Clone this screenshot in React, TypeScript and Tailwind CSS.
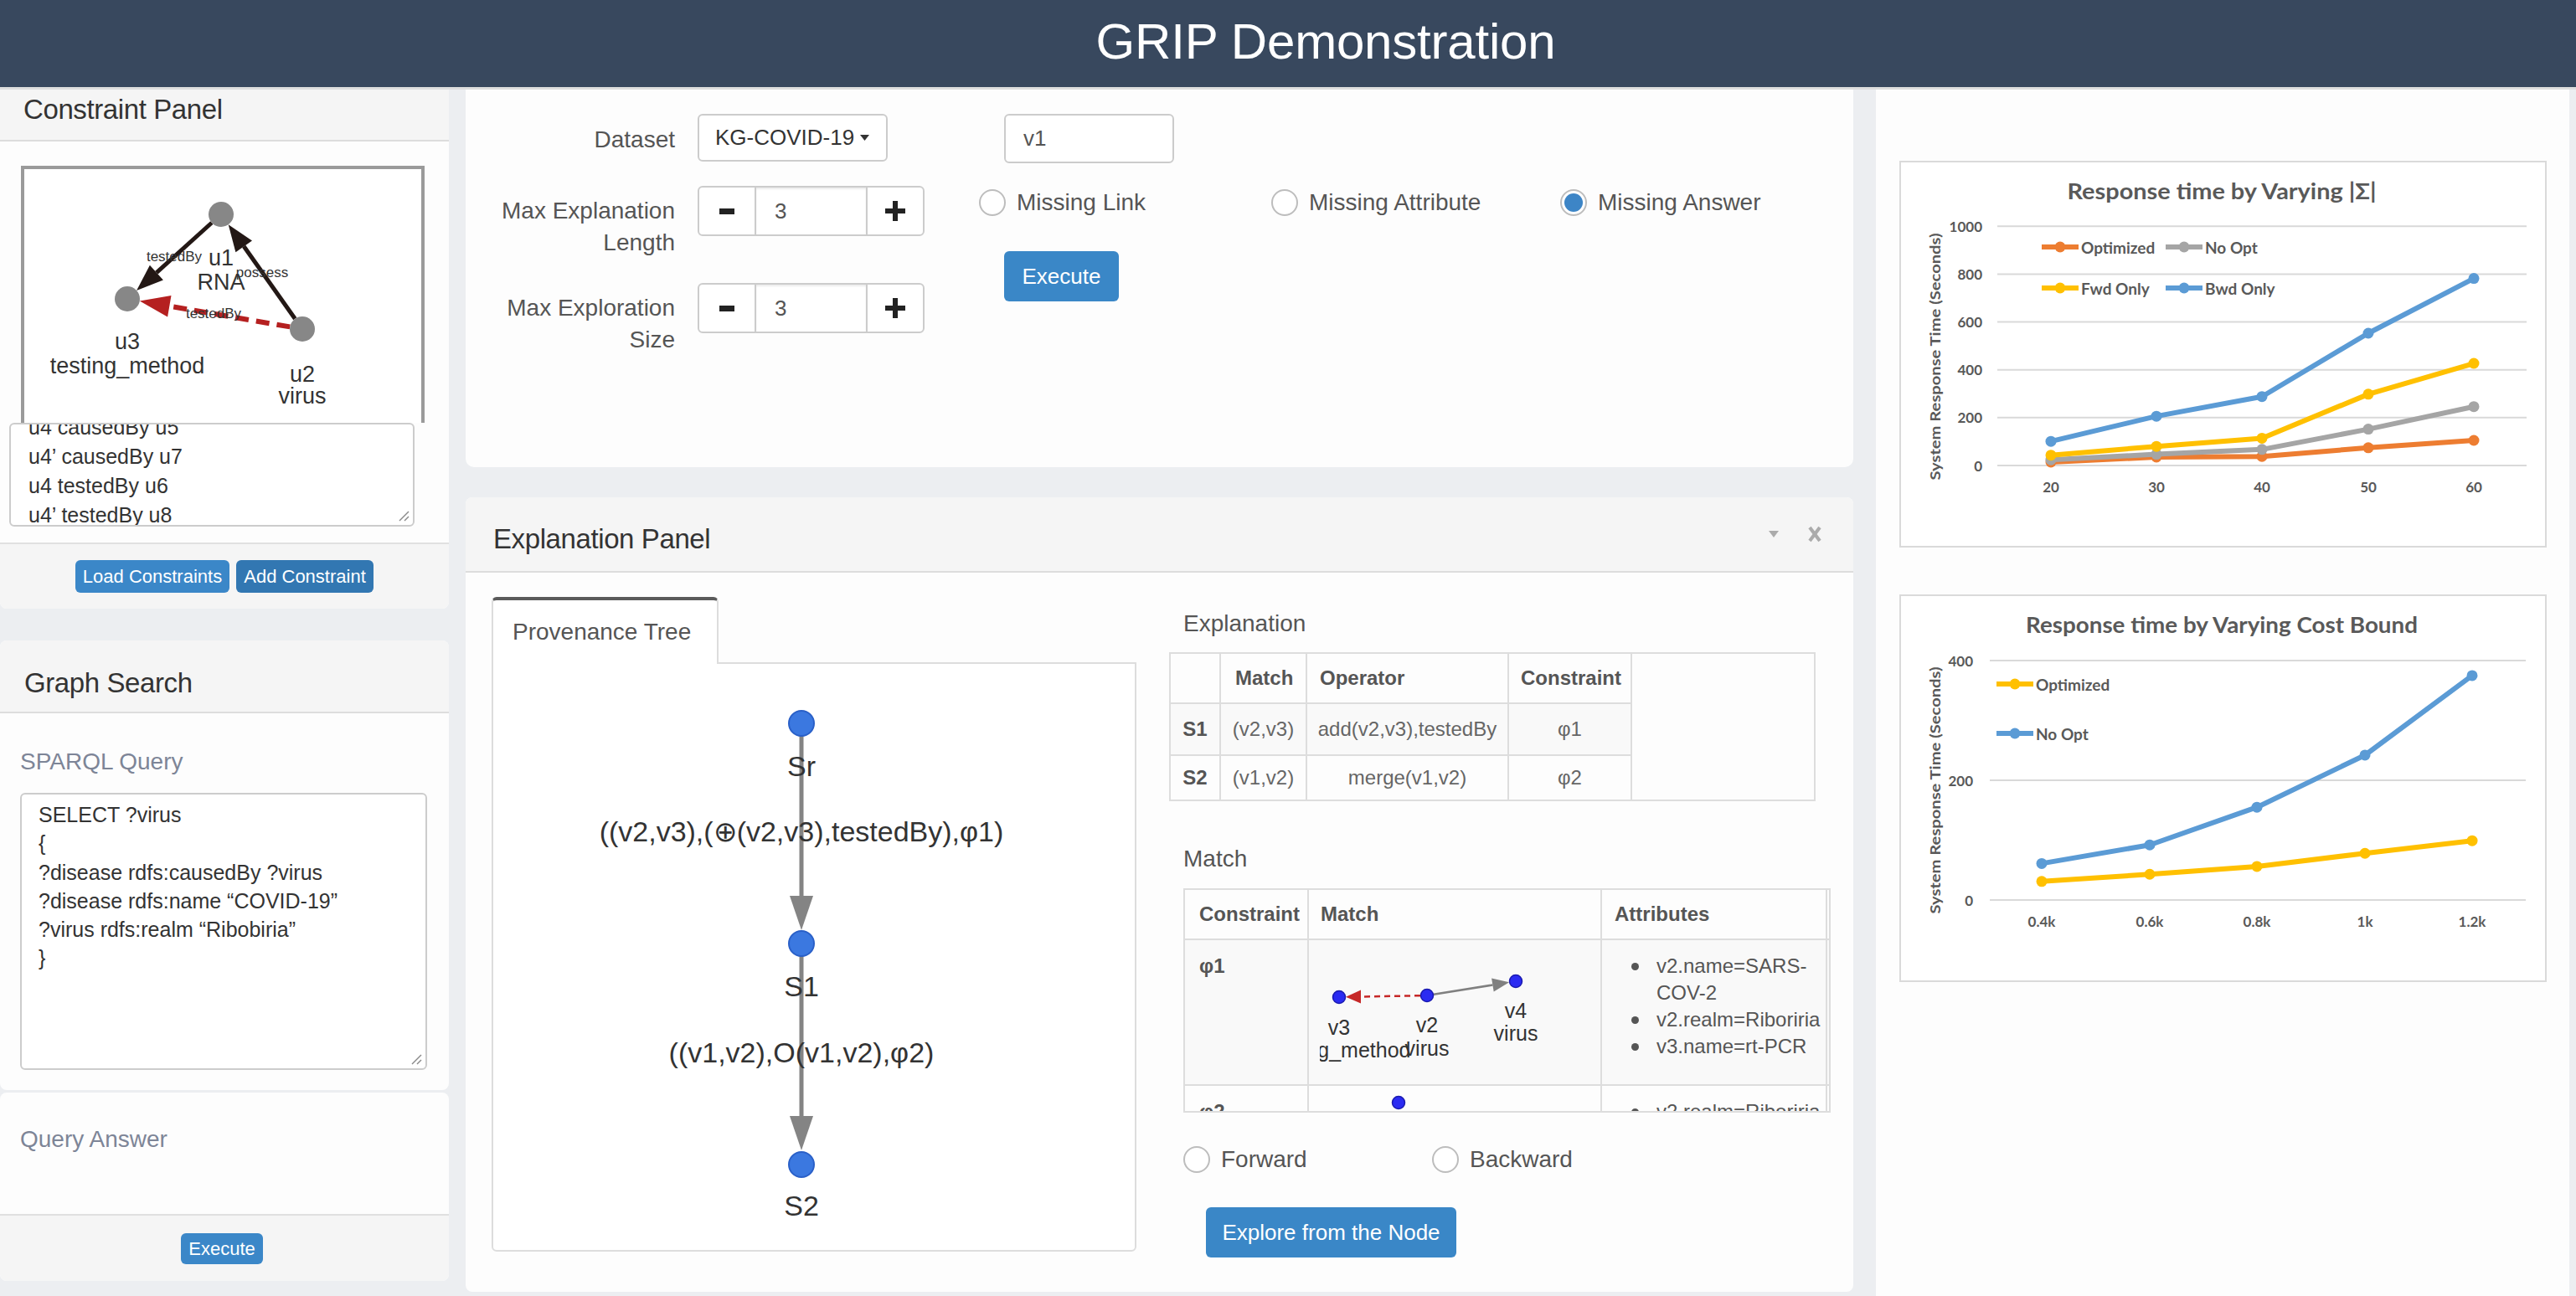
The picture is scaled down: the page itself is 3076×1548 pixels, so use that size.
import React from "react";

const SANS = "font-['Liberation_Sans',Arial,sans-serif]";
const SVG_FONT = "Liberation Sans, Arial, sans-serif";

function Radio({ checked = false }: { checked?: boolean }) {
  return (
    <span className="w-[32px] h-[32px] rounded-full border-[2px] border-[#bdbdbd] bg-white flex items-center justify-center shrink-0">
      {checked && <span className="w-[22px] h-[22px] rounded-full bg-[#3d85c6]" />}
    </span>
  );
}

function ResizeHandle() {
  return (
    <svg width="14" height="14" className="absolute right-[4px] bottom-[4px]">
      <line x1="13" y1="2" x2="2" y2="13" stroke="#8a8a8a" strokeWidth="1.5" />
      <line x1="13" y1="8" x2="8" y2="13" stroke="#8a8a8a" strokeWidth="1.5" />
    </svg>
  );
}

function Header() {
  return (
    <header className="h-[107px] bg-[#38485e] border-b-[3px] border-[#dedede] flex items-center justify-center pb-[4px] pl-[90px]">
      <h1 className="text-white text-[60px] leading-none tracking-[-0.2px]">GRIP Demonstration</h1>
    </header>
  );
}

function ConstraintGraph() {
  const big = { fontSize: 27, fill: "#333", textAnchor: "middle" as const, dominantBaseline: "central" as const };
  const small = { fontSize: 17, fill: "#333", textAnchor: "middle" as const, dominantBaseline: "central" as const };
  return (
    <svg width="474" height="303" className="block" fontFamily={SVG_FONT}>
      <line x1="223.9" y1="64" x2="157.9" y2="123.6" stroke="#231815" strokeWidth="5" />
      <polygon points="134.1,145 165.9,132.5 149.9,114.7" fill="#231815" />
      <line x1="323.3" y1="178.8" x2="262.2" y2="92.3" stroke="#231815" strokeWidth="5" />
      <polygon points="243.7,66.2 272,85.4 252.4,99.2" fill="#231815" />
      <line x1="317.2" y1="188.4" x2="173.3" y2="163.7" stroke="#b52020" strokeWidth="6" strokeDasharray="16 9" />
      <polygon points="137.8,157.6 175.5,150.9 171.1,176.5" fill="#b52020" />
      <circle cx="235" cy="54" r="15" fill="#878787" />
      <circle cx="123" cy="155" r="15" fill="#878787" />
      <circle cx="332" cy="191" r="15" fill="#878787" />
      <text x="179" y="104" {...small}>testedBy</text>
      <text x="235" y="106" {...big}>u1</text>
      <text x="235" y="135" {...big}>RNA</text>
      <text x="284" y="123" {...small}>possess</text>
      <text x="226" y="172" {...small}>testedBy</text>
      <text x="123" y="206" {...big}>u3</text>
      <text x="123" y="235" {...big}>testing_method</text>
      <text x="332" y="245" {...big}>u2</text>
      <text x="332" y="271" {...big}>virus</text>
    </svg>
  );
}

function ConstraintPanel() {
  const lines = ["u4 causedBy u5", "u4’ causedBy u7", "u4 testedBy u6", "u4’ testedBy u8"];
  return (
    <section className="w-[536px] h-[620px] bg-[#fdfdfd] rounded-b-[8px] overflow-hidden">
      <div className="h-[62px] bg-[#f5f5f5] border-b-[2px] border-[#dddddd] pl-[28px] pt-[4px]">
        <h3 className="text-[33px] leading-[40px] text-[#333] tracking-[-0.4px]">Constraint Panel</h3>
      </div>
      <div className="h-[479px] pt-[29px]">
        <div className="ml-[25px] w-[482px] h-[307px] border-[4px] border-b-0 border-[#9a9a9a] bg-white overflow-hidden">
          <ConstraintGraph />
        </div>
        <div className="relative ml-[11px] w-[484px] h-[124px] border-[2px] border-[#cccccc] rounded-[6px] bg-white overflow-hidden pl-[21px]">
          <div className="-mt-[14px] text-[25px] leading-[35px] text-[#333]">
            {lines.map((l) => (
              <div key={l}>{l}</div>
            ))}
          </div>
          <ResizeHandle />
        </div>
      </div>
      <div className="h-[79px] bg-[#f5f5f5] border-t-[2px] border-[#e0e0e0] flex items-center justify-center gap-[8px]">
        <button className="w-[184px] h-[39px] rounded-[6px] bg-[#3b87c8] text-white text-[22px]">Load Constraints</button>
        <button className="w-[164px] h-[39px] rounded-[6px] bg-[#3277b2] text-white text-[22px]">Add Constraint</button>
      </div>
    </section>
  );
}

function GraphSearch() {
  const query = [
    "SELECT ?virus",
    "{",
    "?disease rdfs:causedBy ?virus",
    "?disease rdfs:name “COVID-19”",
    "?virus rdfs:realm “Ribobiria”",
    "}",
  ];
  return (
    <section className="mt-[38px] h-[537px] bg-[#fdfdfd] rounded-[8px] overflow-hidden">
      <div className="h-[87px] bg-[#f5f5f5] border-b-[2px] border-[#dddddd] pl-[29px] pt-[31px]">
        <h3 className="text-[33px] leading-[40px] text-[#333] tracking-[-0.4px]">Graph Search</h3>
      </div>
      <div className="pl-[24px]">
        <p className="mt-[40px] text-[28px] leading-[36px] text-[#7d8597]">SPARQL Query</p>
        <div className="relative mt-[19px] w-[486px] h-[331px] border-[2px] border-[#cccccc] rounded-[6px] bg-white pl-[20px] pt-[7px] text-[25px] leading-[34.3px] text-[#333]">
          {query.map((q) => (
            <div key={q}>{q}</div>
          ))}
          <ResizeHandle />
        </div>
      </div>
    </section>
  );
}

function QueryAnswer() {
  return (
    <section className="mt-[3px] h-[225px] bg-[#fdfdfd] rounded-[8px] overflow-hidden">
      <div className="h-[145px] pl-[24px] pt-[38px]">
        <p className="text-[28px] leading-[36px] text-[#7d8597]">Query Answer</p>
      </div>
      <div className="h-[80px] bg-[#f5f5f5] border-t-[2px] border-[#e0e0e0] flex items-center justify-center pr-[6px]">
        <button className="w-[98px] h-[37px] rounded-[6px] bg-[#3b87c8] text-white text-[22px]">Execute</button>
      </div>
    </section>
  );
}

function Spinner() {
  return (
    <div className="flex h-[60px]">
      <div className="w-[70px] border-[2px] border-[#cccccc] rounded-l-[6px] bg-white flex items-center justify-center">
        <span className="block w-[18px] h-[7px] bg-[#222]" />
      </div>
      <div className="w-[131px] border-y-[2px] border-[#cccccc] bg-white shadow-[inset_0_2px_2px_rgba(0,0,0,0.08)] flex items-center pl-[22px] text-[26px] text-[#555]">
        3
      </div>
      <div className="w-[70px] border-[2px] border-[#cccccc] rounded-r-[6px] bg-white flex items-center justify-center">
        <svg width="24" height="24">
          <rect x="0" y="9" width="24" height="6" fill="#222" />
          <rect x="9" y="0" width="6" height="24" fill="#222" />
        </svg>
      </div>
    </div>
  );
}

function FormLabel({ children, pt }: { children: React.ReactNode; pt: string }) {
  return (
    <div className={`w-[250px] shrink-0 text-right text-[28px] leading-[38px] text-[#555] ${pt}`}>{children}</div>
  );
}

function QueryCard() {
  return (
    <section className="w-[1657px] h-[451px] bg-[#fdfdfd] rounded-b-[10px] flex pt-[29px]">
      <div className="w-[560px] flex flex-col">
        <div className="flex items-start">
          <FormLabel pt="pt-[12px]">Dataset</FormLabel>
          <div className="ml-[27px] w-[227px] h-[57px] border-[2px] border-[#cccccc] rounded-[6px] bg-white flex items-center pl-[19px] text-[26px] text-[#333]">
            KG-COVID-19
            <svg width="11" height="7" className="ml-[7px]">
              <polygon points="0,0 11,0 5.5,7" fill="#333" />
            </svg>
          </div>
        </div>
        <div className="flex items-start mt-[29px]">
          <FormLabel pt="pt-[11px]">
            Max Explanation
            <br />
            Length
          </FormLabel>
          <div className="ml-[27px]">
            <Spinner />
          </div>
        </div>
        <div className="flex items-start mt-[29px]">
          <FormLabel pt="pt-[11px]">
            Max Exploration
            <br />
            Size
          </FormLabel>
          <div className="ml-[27px]">
            <Spinner />
          </div>
        </div>
      </div>
      <div className="ml-[53px] flex flex-col">
        <div className="ml-[30px] w-[203px] h-[59px] border-[2px] border-[#cccccc] rounded-[6px] bg-white flex items-center pl-[21px] text-[26px] text-[#555]">
          v1
        </div>
        <div className="mt-[26px] flex items-center text-[28px] text-[#555]">
          <div className="w-[349px] flex items-center gap-[13px]">
            <Radio />
            <span>Missing Link</span>
          </div>
          <div className="w-[345px] flex items-center gap-[13px]">
            <Radio />
            <span>Missing Attribute</span>
          </div>
          <div className="flex items-center gap-[13px]">
            <Radio checked />
            <span>Missing Answer</span>
          </div>
        </div>
        <button className="mt-[37px] ml-[30px] w-[137px] h-[60px] rounded-[6px] bg-[#3a87c7] text-white text-[26px]">
          Execute
        </button>
      </div>
    </section>
  );
}

function ProvenanceTree() {
  const label = { fontSize: 34, fill: "#333", textAnchor: "middle" as const, dominantBaseline: "central" as const };
  return (
    <svg width="766" height="700" className="block" fontFamily={SVG_FONT}>
      <line x1="368" y1="84" x2="368" y2="280" stroke="#848484" strokeWidth="5" />
      <polygon points="368,318 354,277 382,277" fill="#848484" />
      <line x1="368" y1="347" x2="368" y2="543" stroke="#848484" strokeWidth="5" />
      <polygon points="368,581 354,540 382,540" fill="#848484" />
      <circle cx="368" cy="71" r="15" fill="#3b78e0" stroke="#2a60c8" strokeWidth="2" />
      <circle cx="368" cy="334" r="15" fill="#3b78e0" stroke="#2a60c8" strokeWidth="2" />
      <circle cx="368" cy="598" r="15" fill="#3b78e0" stroke="#2a60c8" strokeWidth="2" />
      <text x="368" y="122" {...label}>Sr</text>
      <text x="368" y="200" {...label}>((v2,v3),(⊕(v2,v3),testedBy),φ1)</text>
      <text x="368" y="385" {...label}>S1</text>
      <text x="368" y="464" {...label}>((v1,v2),O(v1,v2),φ2)</text>
      <text x="368" y="647" {...label}>S2</text>
    </svg>
  );
}

function MatchGraph() {
  const t = { fontSize: 25, fill: "#333", textAnchor: "middle" as const, dominantBaseline: "central" as const };
  return (
    <svg width="320" height="140" className="block" fontFamily={SVG_FONT}>
      <line x1="120" y1="52.2" x2="48" y2="53.5" stroke="#c62828" strokeWidth="2.5" strokeDasharray="7 5" />
      <polygon points="31,53.8 49,45.5 49,61.5" fill="#c62828" />
      <line x1="135.9" y1="50.7" x2="206.4" y2="39.5" stroke="#808080" strokeWidth="2.5" />
      <polygon points="226.1,36.3 207.7,47.4 205.1,31.6" fill="#808080" />
      <circle cx="23" cy="54" r="7.5" fill="#2b2bf2" stroke="#1a1ab0" strokeWidth="1.5" />
      <circle cx="128" cy="52" r="7.5" fill="#2b2bf2" stroke="#1a1ab0" strokeWidth="1.5" />
      <circle cx="234" cy="35" r="7.5" fill="#2b2bf2" stroke="#1a1ab0" strokeWidth="1.5" />
      <text x="23" y="90" {...t}>v3</text>
      <text x="23" y="117" {...t}>testing_method</text>
      <text x="128" y="87" {...t}>v2</text>
      <text x="128" y="115" {...t}>virus</text>
      <text x="234" y="70" {...t}>v4</text>
      <text x="234" y="97" {...t}>virus</text>
    </svg>
  );
}

function ExplanationTable() {
  const widths = ["w-[60px]", "w-[103px]", "w-[241px]", "w-[147px]"];
  const rows = [
    { id: "S1", match: "(v2,v3)", op: "add(v2,v3),testedBy", c: "φ1", bg: "bg-[#f9f9f9]", h: "h-[62px] border-b-[2px]" },
    { id: "S2", match: "(v1,v2)", op: "merge(v1,v2)", c: "φ2", bg: "", h: "h-[52px]" },
  ];
  return (
    <div className="w-[772px] h-[178px] border-[2px] border-[#dddddd] flex flex-col text-[24px] text-[#666]">
      <div className="flex h-[60px]">
        <div className="flex border-b-[2px] border-[#dddddd] font-bold text-[#555]">
          <div className={`${widths[0]} border-r-[2px] border-[#dddddd]`} />
          <div className={`${widths[1]} border-r-[2px] border-[#dddddd] flex items-center pl-[17px]`}>Match</div>
          <div className={`${widths[2]} border-r-[2px] border-[#dddddd] flex items-center pl-[15px]`}>Operator</div>
          <div className={`${widths[3]} border-r-[2px] border-[#dddddd] flex items-center pl-[14px]`}>Constraint</div>
        </div>
      </div>
      {rows.map((r) => (
        <div key={r.id} className="flex">
          <div className={`flex ${r.h} border-[#dddddd] ${r.bg}`}>
            <div className={`${widths[0]} border-r-[2px] border-[#dddddd] flex items-center justify-center font-bold text-[#555]`}>
              {r.id}
            </div>
            <div className={`${widths[1]} border-r-[2px] border-[#dddddd] flex items-center justify-center`}>{r.match}</div>
            <div className={`${widths[2]} border-r-[2px] border-[#dddddd] flex items-center justify-center`}>{r.op}</div>
            <div className={`${widths[3]} border-r-[2px] border-[#dddddd] flex items-center justify-center`}>{r.c}</div>
          </div>
        </div>
      ))}
    </div>
  );
}

function Bullet() {
  return (
    <span className="w-[30px] shrink-0 flex items-center h-[32px]">
      <span className="block w-[9px] h-[9px] rounded-full bg-[#555]" />
    </span>
  );
}

function MatchTable() {
  return (
    <div className="w-[773px] h-[268px] border-[2px] border-[#dddddd] overflow-hidden text-[24px] text-[#555]">
      <div className="flex h-[60px] border-b-[2px] border-[#dddddd] font-bold">
        <div className="w-[148px] border-r-[2px] border-[#dddddd] flex items-center pl-[17px]">Constraint</div>
        <div className="w-[350px] border-r-[2px] border-[#dddddd] flex items-center pl-[14px]">Match</div>
        <div className="w-[269px] border-r-[2px] border-[#dddddd] flex items-center pl-[15px]">Attributes</div>
      </div>
      <div className="flex h-[174px] border-b-[2px] border-[#dddddd] bg-[#f9f9f9]">
        <div className="w-[148px] border-r-[2px] border-[#dddddd] pl-[17px] pt-[15px] leading-[32px] font-bold">φ1</div>
        <div className="w-[350px] border-r-[2px] border-[#dddddd] pl-[13px] pt-[14px]">
          <MatchGraph />
        </div>
        <div className="w-[269px] border-r-[2px] border-[#dddddd] pl-[35px] pr-[8px] pt-[15px] leading-[32px]">
          {["v2.name=SARS-COV-2", "v2.realm=Riboriria", "v3.name=rt-PCR"].map((a) => (
            <div key={a} className="flex">
              <Bullet />
              <span className="break-words">{a}</span>
            </div>
          ))}
        </div>
      </div>
      <div className="flex h-[174px]">
        <div className="w-[148px] border-r-[2px] border-[#dddddd] pl-[17px] pt-[15px] leading-[32px] font-bold">φ2</div>
        <div className="w-[350px] border-r-[2px] border-[#dddddd] pl-[13px] pt-[2px]">
          <svg width="200" height="40" className="block">
            <circle cx="94" cy="18" r="7.5" fill="#2b2bf2" stroke="#1a1ab0" strokeWidth="1.5" />
          </svg>
        </div>
        <div className="w-[269px] border-r-[2px] border-[#dddddd] pl-[35px] pt-[15px] leading-[32px]">
          <div className="flex">
            <Bullet />
            <span>v2.realm=Riboriria</span>
          </div>
        </div>
      </div>
    </div>
  );
}

function ExplanationPanel() {
  return (
    <section className="mt-[36px] w-[1657px] h-[949px] bg-[#fdfdfd] rounded-[8px] overflow-hidden">
      <div className="h-[90px] bg-[#f5f5f5] border-b-[2px] border-[#dddddd] flex items-center pl-[33px] pr-[38px] pt-[12px]">
        <h3 className="text-[33px] leading-[40px] text-[#333] tracking-[-0.4px]">Explanation Panel</h3>
        <div className="ml-auto flex items-center gap-[35px] -mt-[12px]">
          <svg width="12" height="8">
            <polygon points="0,0 12,0 6,8" fill="#ababab" />
          </svg>
          <svg width="16" height="20">
            <line x1="2" y1="2" x2="14" y2="18" stroke="#ababab" strokeWidth="4" />
            <line x1="14" y1="2" x2="2" y2="18" stroke="#ababab" strokeWidth="4" />
          </svg>
        </div>
      </div>
      <div className="flex pl-[31px] pt-[29px]">
        <div className="w-[770px] flex flex-col">
          <div className="relative z-10 -mb-[2px] w-[271px] h-[80px] bg-white border-t-[4px] border-t-[#5b5b5b] border-x-[2px] border-x-[#dddddd] rounded-t-[6px] flex items-center pl-[23px] text-[28px] text-[#555]">
            Provenance Tree
          </div>
          <div className="h-[704px] border-[2px] border-[#dddddd] rounded-b-[6px] bg-white">
            <ProvenanceTree />
          </div>
        </div>
        <div className="ml-[39px] flex flex-col">
          <p className="ml-[17px] mt-[14px] text-[28px] leading-[36px] text-[#555]">Explanation</p>
          <div className="mt-[16px]">
            <ExplanationTable />
          </div>
          <p className="ml-[17px] mt-[51px] text-[28px] leading-[36px] text-[#555]">Match</p>
          <div className="ml-[17px] mt-[17px]">
            <MatchTable />
          </div>
          <div className="ml-[17px] mt-[35px] flex items-center text-[28px] text-[#555]">
            <div className="w-[297px] flex items-center gap-[13px]">
              <Radio />
              <span>Forward</span>
            </div>
            <div className="flex items-center gap-[13px]">
              <Radio />
              <span>Backward</span>
            </div>
          </div>
          <button className="ml-[44px] mt-[36px] w-[299px] h-[60px] rounded-[6px] bg-[#3a87c7] text-white text-[26px]">
            Explore from the Node
          </button>
        </div>
      </div>
    </section>
  );
}

type Series = { color: string; values: number[] };
type LegendItem = { x: number; y: number; label: string; color: string };

function LineChart({
  title,
  titleWidth,
  ticks,
  zeroY,
  scale,
  xs,
  xLabels,
  xLabelY,
  gridX,
  tickRight,
  series,
  legend,
}: {
  title: string;
  titleWidth: number;
  ticks: number[];
  zeroY: number;
  scale: number;
  xs: number[];
  xLabels: string[];
  xLabelY: number;
  gridX: [number, number];
  tickRight: number;
  series: Series[];
  legend: LegendItem[];
}) {
  const y = (v: number) => zeroY - v * scale;
  const grey = "#595959";
  return (
    <svg width="769" height="459" viewBox="2 2 769 459" className="block" fontFamily="Lato, 'Open Sans', sans-serif" fontWeight={700}>
      <text x="385" y="36" textAnchor="middle" dominantBaseline="central" fontSize="26" fill={grey} textLength={titleWidth} lengthAdjust="spacingAndGlyphs">
        {title}
      </text>
      <text transform="translate(42 234) rotate(-90)" textAnchor="middle" dominantBaseline="central" fontSize="17" fill={grey} textLength={295} lengthAdjust="spacingAndGlyphs">
        System Response Time (Seconds)
      </text>
      {ticks.map((t) => (
        <g key={t}>
          <line x1={gridX[0]} x2={gridX[1]} y1={y(t)} y2={y(t)} stroke="#d9d9d9" strokeWidth="2" />
          <text x={tickRight} y={y(t)} textAnchor="end" dominantBaseline="central" fontSize="17" fill={grey}>
            {t}
          </text>
        </g>
      ))}
      {xLabels.map((l, i) => (
        <text key={l} x={xs[i]} y={xLabelY} textAnchor="middle" dominantBaseline="central" fontSize="17" fill={grey}>
          {l}
        </text>
      ))}
      {series.map((s) => (
        <g key={s.color}>
          <polyline
            points={s.values.map((v, i) => `${xs[i]},${y(v)}`).join(" ")}
            fill="none"
            stroke={s.color}
            strokeWidth="6"
            strokeLinejoin="round"
          />
          {s.values.map((v, i) => (
            <circle key={i} cx={xs[i]} cy={y(v)} r="6.5" fill={s.color} />
          ))}
        </g>
      ))}
      {legend.map((l) => (
        <g key={l.label + l.color}>
          <line x1={l.x} x2={l.x + 44} y1={l.y} y2={l.y} stroke={l.color} strokeWidth="6" />
          <circle cx={l.x + 22} cy={l.y} r="6.5" fill={l.color} />
          <text x={l.x + 47} y={l.y} dominantBaseline="central" fontSize="19" fill={grey}>
            {l.label}
          </text>
        </g>
      ))}
    </svg>
  );
}

function ChartsCard() {
  return (
    <section className="ml-[27px] w-[828px] h-[1441px] bg-[#fdfdfd] pt-[85px] pl-[28px]">
      <div className="w-[773px] h-[462px] border-[2px] border-[#dadada] bg-white">
        <LineChart
          title="Response time by Varying |Σ|"
          titleWidth={369}
          ticks={[0, 200, 400, 600, 800, 1000]}
          zeroY={364}
          scale={0.2857}
          xs={[181, 307, 433, 560, 686]}
          xLabels={["20", "30", "40", "50", "60"]}
          xLabelY={389}
          gridX={[117, 749]}
          tickRight={99}
          series={[
            { color: "#ED7D31", values: [14, 35, 38, 74, 105] },
            { color: "#A5A5A5", values: [24, 47, 67, 152, 246] },
            { color: "#FFC000", values: [43, 80, 114, 298, 427] },
            { color: "#5B9BD5", values: [101, 206, 288, 553, 782] },
          ]}
          legend={[
            { x: 170, y: 103, label: "Optimized", color: "#ED7D31" },
            { x: 318, y: 103, label: "No Opt", color: "#A5A5A5" },
            { x: 170, y: 152, label: "Fwd Only", color: "#FFC000" },
            { x: 318, y: 152, label: "Bwd Only", color: "#5B9BD5" },
          ]}
        />
      </div>
      <div className="mt-[56px] w-[773px] h-[463px] border-[2px] border-[#dadada] bg-white">
        <LineChart
          title="Response time by Varying Cost Bound"
          titleWidth={468}
          ticks={[0, 200, 400]}
          zeroY={365}
          scale={0.715}
          xs={[170, 299, 427, 556, 684]}
          xLabels={["0.4k", "0.6k", "0.8k", "1k", "1.2k"]}
          xLabelY={390}
          gridX={[108, 748]}
          tickRight={88}
          series={[
            { color: "#FFC000", values: [31, 43, 56, 78, 99] },
            { color: "#5B9BD5", values: [61, 92, 155, 242, 375] },
          ]}
          legend={[
            { x: 116, y: 107, label: "Optimized", color: "#FFC000" },
            { x: 116, y: 166, label: "No Opt", color: "#5B9BD5" },
          ]}
        />
      </div>
    </section>
  );
}

export default function App() {
  return (
    <div className={`${SANS} w-[3076px] h-[1548px] overflow-hidden bg-[#eceef1] text-[#333]`}>
      <Header />
      <div className="flex items-start">
        <div className="w-[536px] flex flex-col">
          <ConstraintPanel />
          <GraphSearch />
          <QueryAnswer />
        </div>
        <div className="ml-[20px] w-[1657px] flex flex-col">
          <QueryCard />
          <ExplanationPanel />
        </div>
        <ChartsCard />
      </div>
    </div>
  );
}
